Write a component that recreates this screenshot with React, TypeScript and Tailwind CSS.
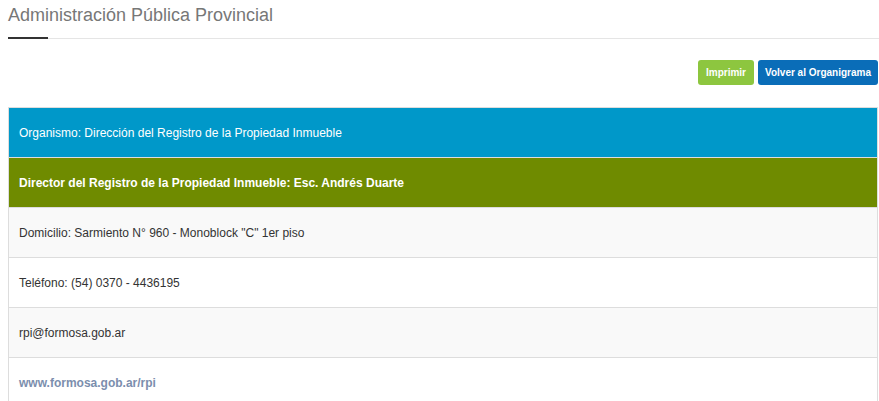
export default function App() {
  const rows = [
    { text: 'Domicilio: Sarmiento N° 960 - Monoblock "C" 1er piso', bg: "bg-[#f9f9f9]" },
    { text: "Teléfono: (54) 0370 - 4436195", bg: "bg-white" },
    { text: "rpi@formosa.gob.ar", bg: "bg-[#f9f9f9]" },
  ];

  return (
    <div className="w-[879px] h-[401px] overflow-hidden bg-white font-['Liberation_Sans',Arial,sans-serif]">
      {/* Heading */}
      <div className="pl-2 pt-[3px]">
        <h1 className="text-[18px] leading-[24px] text-[#777777]">
          Administración Pública Provincial
        </h1>
        <div className="mt-[10px] flex items-end">
          <div className="w-10 h-[2px] bg-[#333333]" />
          <div className="flex-1 h-px bg-[#e5e5e5]" />
        </div>
      </div>

      {/* Actions */}
      <div className="mt-[21px] flex justify-end gap-1 pr-px">
        <button className="h-[25px] w-[56px] rounded-[3px] bg-[#8dc63f] text-white text-[10px] font-bold">
          Imprimir
        </button>
        <button className="h-[25px] w-[120px] rounded-[3px] bg-[#0a6db8] text-white text-[10px] font-bold">
          Volver al Organigrama
        </button>
      </div>

      {/* Table */}
      <div className="mt-[22px] ml-2 mr-px border border-[#dddddd] text-[12px]">
        <div className="h-[50px] flex items-center px-[10px] bg-[#0098c9] text-white border-b border-[#dddddd]">
          Organismo: Dirección del Registro de la Propiedad Inmueble
        </div>
        <div className="h-[50px] flex items-center px-[10px] bg-[#6f8b00] text-white font-bold border-b border-[#dddddd]">
          Director del Registro de la Propiedad Inmueble: Esc. Andrés Duarte
        </div>
        {rows.map((r) => (
          <div
            key={r.text}
            className={`h-[50px] flex items-center px-[10px] text-[#333333] border-b border-[#dddddd] ${r.bg}`}
          >
            {r.text}
          </div>
        ))}
        <div className="h-[50px] flex items-center px-[10px] bg-white">
          <a className="text-[#7b8ead] font-bold">www.formosa.gob.ar/rpi</a>
        </div>
      </div>
    </div>
  );
}
